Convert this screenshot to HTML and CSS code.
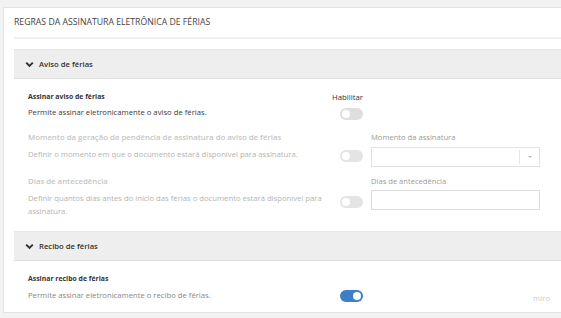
FILE: index.html
```html
<!DOCTYPE html>
<html lang="pt-BR">
<head>
  <meta charset="UTF-8" />
  <meta name="viewport" content="width=device-width, initial-scale=1" />
  <title>Regras da assinatura eletrônica de férias</title>
  <link rel="stylesheet" href="styles.css">
</head>
<body>
  <div class="card">
    <h1 class="card-title">REGRAS DA ASSINATURA ELETRÔNICA DE FÉRIAS</h1>

    <section class="group">
      <div class="group-header">
        <svg class="chevron" width="9" height="7" viewBox="0 0 9 7"><path d="M1.2 1.6 L4.5 4.9 L7.8 1.6" fill="none" stroke="#333" stroke-width="2"/></svg>
        Aviso de férias
      </div>
      <div class="group-body">
        <div class="rule">
          <div class="rule-text">
            <div class="rule-name">Assinar aviso de férias</div>
            <div class="rule-desc dark">Permite assinar eletronicamente o aviso de férias.</div>
          </div>
          <div class="rule-switch first">
            <div class="col-label">Habilitar</div>
            <div class="switch-box"><span class="switch"></span></div>
          </div>
        </div>

        <div class="rule disabled">
          <div class="rule-text">
            <div class="rule-name">Momento da geração da pendência de assinatura do aviso de férias</div>
            <div class="rule-desc">Definir o momento em que o documento estará disponivel para assinatura.</div>
          </div>
          <div class="rule-switch">
            <div class="col-label"></div>
            <div class="switch-box"><span class="switch"></span></div>
          </div>
          <div class="rule-field">
            <div class="field-label">Momento da assinatura</div>
            <div class="select">
              <span class="select-value"></span>
              <span class="select-arrow"><span class="caret"></span></span>
            </div>
          </div>
        </div>

        <div class="rule disabled">
          <div class="rule-text">
            <div class="rule-name">Dias de antecedência</div>
            <div class="rule-desc">Definir quantos dias antes do inicio das férias o documento estará disponivel para assinatura.</div>
          </div>
          <div class="rule-switch">
            <div class="col-label"></div>
            <div class="switch-box low"><span class="switch"></span></div>
          </div>
          <div class="rule-field">
            <div class="field-label">Dias de antecedência</div>
            <input class="input" type="text">
          </div>
        </div>
      </div>
    </section>

    <section class="group">
      <div class="group-header">
        <svg class="chevron" width="9" height="7" viewBox="0 0 9 7"><path d="M1.2 1.6 L4.5 4.9 L7.8 1.6" fill="none" stroke="#333" stroke-width="2"/></svg>
        Recibo de férias
      </div>
      <div class="group-body">
        <div class="rule">
          <div class="rule-text">
            <div class="rule-name">Assinar recibo de férias</div>
            <div class="rule-desc">Permite assinar eletronicamente o recibo de férias.</div>
          </div>
          <div class="rule-switch first">
            <div class="col-label"></div>
            <div class="switch-box"><span class="switch on"></span></div>
          </div>
        </div>
      </div>
    </section>
  </div>

  <span class="watermark">miro</span>
</body>
</html>
```

FILE: styles.css
```css
body {
  margin: 0;
  padding: 7px 0 0 3px;
  background: #f2f2f2;
  font-family: "Open Sans", Arial, sans-serif;
  color: #333;
  overflow: hidden;
  height: 311px;
}

.card {
  width: 600px;
  background: #fff;
  border: 1px solid #e4e4e4;
  padding: 0 0 8px 10px;
  box-sizing: border-box;
  height: 306px;
}

.card-title {
  margin: 0;
  font-size: 8.7px;
  font-weight: 400;
  color: #444;
  line-height: 29px;
  border-bottom: 2px solid #efefef;
}

.group {
  margin-top: 10px;
}

.group + .group {
  margin-top: 13px;
}

.group-header {
  display: flex;
  align-items: center;
  gap: 5px;
  height: 28px;
  padding-left: 11px;
  background: #eeeeee;
  border-top: 1px solid #e6e6e6;
  border-bottom: 1px solid #dedede;
  font-size: 7.7px;
  font-weight: 600;
  color: #333;
}

.group-body {
  padding: 10px 0 0 14px;
}

.rule {
  display: grid;
  grid-template-columns: 304px 39px 169px;
  margin-bottom: 6px;
}

.rule:first-child {
  margin-bottom: 8px;
}

.rule:last-child {
  margin-bottom: 0;
}

.rule-name {
  font-size: 6.9px;
  font-weight: 700;
  line-height: 16px;
  color: #333;
}

.rule-desc {
  font-size: 7.7px;
  line-height: 13px;
  margin-top: 2px;
  color: #888;
  padding-right: 4px;
}

.rule-desc.dark {
  color: #3a3a3a;
  margin-top: 1px;
}

.disabled .rule-name {
  font-size: 7.8px;
  font-weight: 600;
  color: #c6c6c6;
}

.disabled .rule-desc {
  color: #b4b4b4;
  margin-top: 3px;
}

.col-label {
  font-size: 7.8px;
  line-height: 16px;
  height: 16px;
  color: #333;
}

.switch-box {
  height: 20px;
  display: flex;
  align-items: center;
  padding-left: 8px;
  margin-top: 1px;
}

.first .switch-box {
  height: 15px;
}

.switch-box.low {
  margin-top: 3px;
}

.switch {
  position: relative;
  width: 23px;
  height: 12px;
  border-radius: 6px;
  background: #dedede;
}

.switch::after {
  content: "";
  position: absolute;
  top: 2px;
  left: 2px;
  width: 8px;
  height: 8px;
  border-radius: 50%;
  background: #fff;
}

.switch.on {
  background: #3c7fc6;
}

.switch.on::after {
  left: auto;
  right: 2px;
}

.disabled .switch {
  background: #e4e4e4;
}

.field-label {
  font-size: 7.6px;
  line-height: 16px;
  color: #9a9a9a;
}

.select {
  display: flex;
  height: 20px;
  margin-top: 2px;
  border: 1px solid #e2e2e2;
  box-sizing: border-box;
}

.select-value {
  flex: 1;
}

.select-arrow {
  width: 19px;
  margin: 2px 0;
  border-left: 1px solid #e8e8e8;
  display: flex;
  align-items: center;
  justify-content: center;
}

.caret {
  width: 0;
  height: 0;
  border-left: 2px solid transparent;
  border-right: 2px solid transparent;
  border-top: 2px solid #bbb;
}

.input {
  display: block;
  width: 169px;
  height: 20px;
  margin: 1px 0 0;
  border: 1px solid #dcdcdc;
  box-sizing: border-box;
  padding: 0 4px;
  font: inherit;
}

.watermark {
  position: absolute;
  left: 533px;
  top: 293px;
  font-size: 7.5px;
  color: #c8c8c8;
  letter-spacing: 0.2px;
}
```
